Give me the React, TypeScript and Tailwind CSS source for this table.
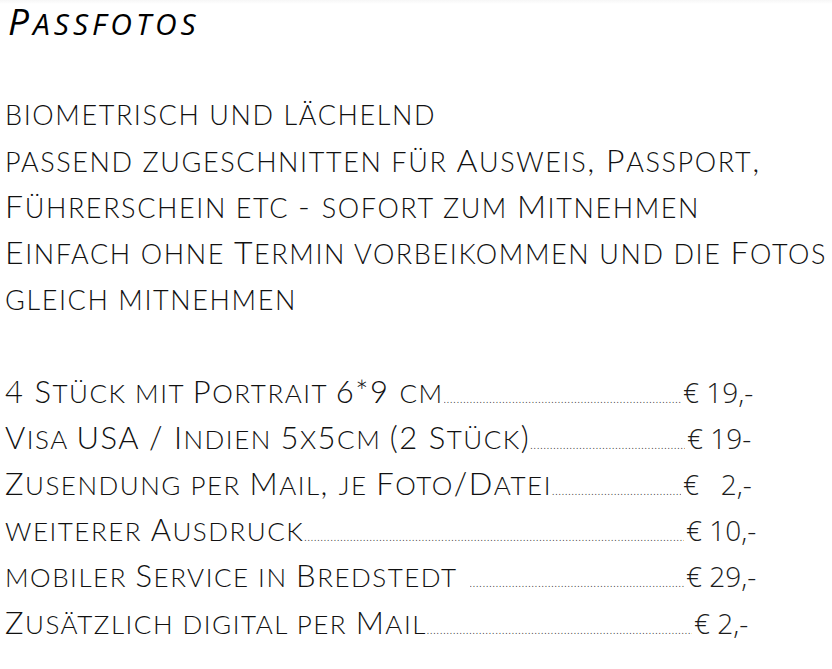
import React from "react";

type CapsProps = {
    text: string,
    big: string,
    small: string,
}

// splits text into runs: lowercase letters get drawn as smaller capitals
const SmallCaps: React.FC<CapsProps> = ({text, big, small}) => {
    const runs: {low: boolean, s: string}[] = [];
    for (const ch of text) {
        const low = ch !== ch.toUpperCase();
        const last = runs[runs.length - 1];
        if (ch === " " && last) {
            last.s += ch;
        } else if (last && last.low === low) {
            last.s += ch;
        } else {
            runs.push({low, s: ch});
        }
    }
    return (
        <>
            {runs.map((r, i) => (
                <span key={i} className={`${r.low ? small : big} leading-none`}>
                    {r.low ? r.s.toUpperCase() : r.s}
                </span>
            ))}
        </>
    );
};

const lines = [
    "biometrisch und lächelnd",
    "passend zugeschnitten für Ausweis, Passport,",
    "Führerschein etc - sofort zum Mitnehmen",
    "Einfach ohne Termin vorbeikommen und die Fotos",
    "gleich mitnehmen",
];

const prices = [
    {label: "4 Stück mit Portrait 6*9 cm", price: "€ 19,-", width: "w-[676px]", gap: ""},
    {label: "Visa USA / Indien 5x5cm (2 Stück)", price: "€ 19-", width: "w-[680px]", gap: ""},
    {label: "Zusendung per Mail, je Foto/Datei", price: "€   2,-", width: "w-[676px]", gap: ""},
    {label: "weiterer Ausdruck", price: "€ 10,-", width: "w-[679px]", gap: ""},
    {label: "mobiler Service in Bredstedt", price: "€ 29,-", width: "w-[679px]", gap: "ml-[12px]"},
    {label: "Zusätzlich digital per Mail", price: "€ 2,-", width: "w-[687px]", gap: ""},
];

const DOTS = ".".repeat(200);

const BIG = "text-[32px]";
const SMALL = "text-[27px]";

export default function App() {
    return (
        <div className="min-h-screen bg-white pl-[5px] text-[#111] font-['Lato',sans-serif] font-light tracking-[1.6px] bg-gradient-to-b from-[#f2f2f2] to-white bg-[length:100%_6px] bg-no-repeat">
            <div className="-mt-[2px]">
                {/* Title */}
                <h1 className="pl-[3px] pr-[6px] leading-[46.2px] text-[37px] italic font-normal tracking-[4px] text-black font-['Open_Sans',sans-serif] whitespace-nowrap">
                    <SmallCaps text="Passfotos" big="text-[37px]" small="text-[30px]" />
                </h1>
                <div className="h-[46.2px]" />

                {/* Description */}
                {lines.map((l, i) => (
                    <div key={i} className="leading-[46.2px] text-[32px] whitespace-nowrap">
                        <SmallCaps text={l} big={BIG} small={SMALL} />
                    </div>
                ))}
                <div className="h-[46.2px]" />

                {/* Price list */}
                {prices.map((p, i) => (
                    <div key={i} className="flex items-baseline h-[46.2px] leading-[46.2px] text-[32px]">
                        <div className={`flex items-baseline ${p.width}`}>
                            <span className="whitespace-nowrap tracking-[1.5px]">
                                <SmallCaps text={p.label} big="text-[31px]" small="text-[26px]" />
                            </span>
                            <span className={`flex-1 min-w-0 overflow-hidden whitespace-nowrap text-[9px] tracking-[0.9px] text-[#333] font-['Open_Sans',sans-serif] font-normal leading-none ${p.gap}`}>
                                {DOTS}
                            </span>
                        </div>
                        <span className="ml-[2px] whitespace-pre text-[28px] leading-none tracking-normal text-[#1c1c1c] font-['Open_Sans',sans-serif] font-light">
                            {p.price}
                        </span>
                    </div>
                ))}
            </div>
        </div>
    );
}
